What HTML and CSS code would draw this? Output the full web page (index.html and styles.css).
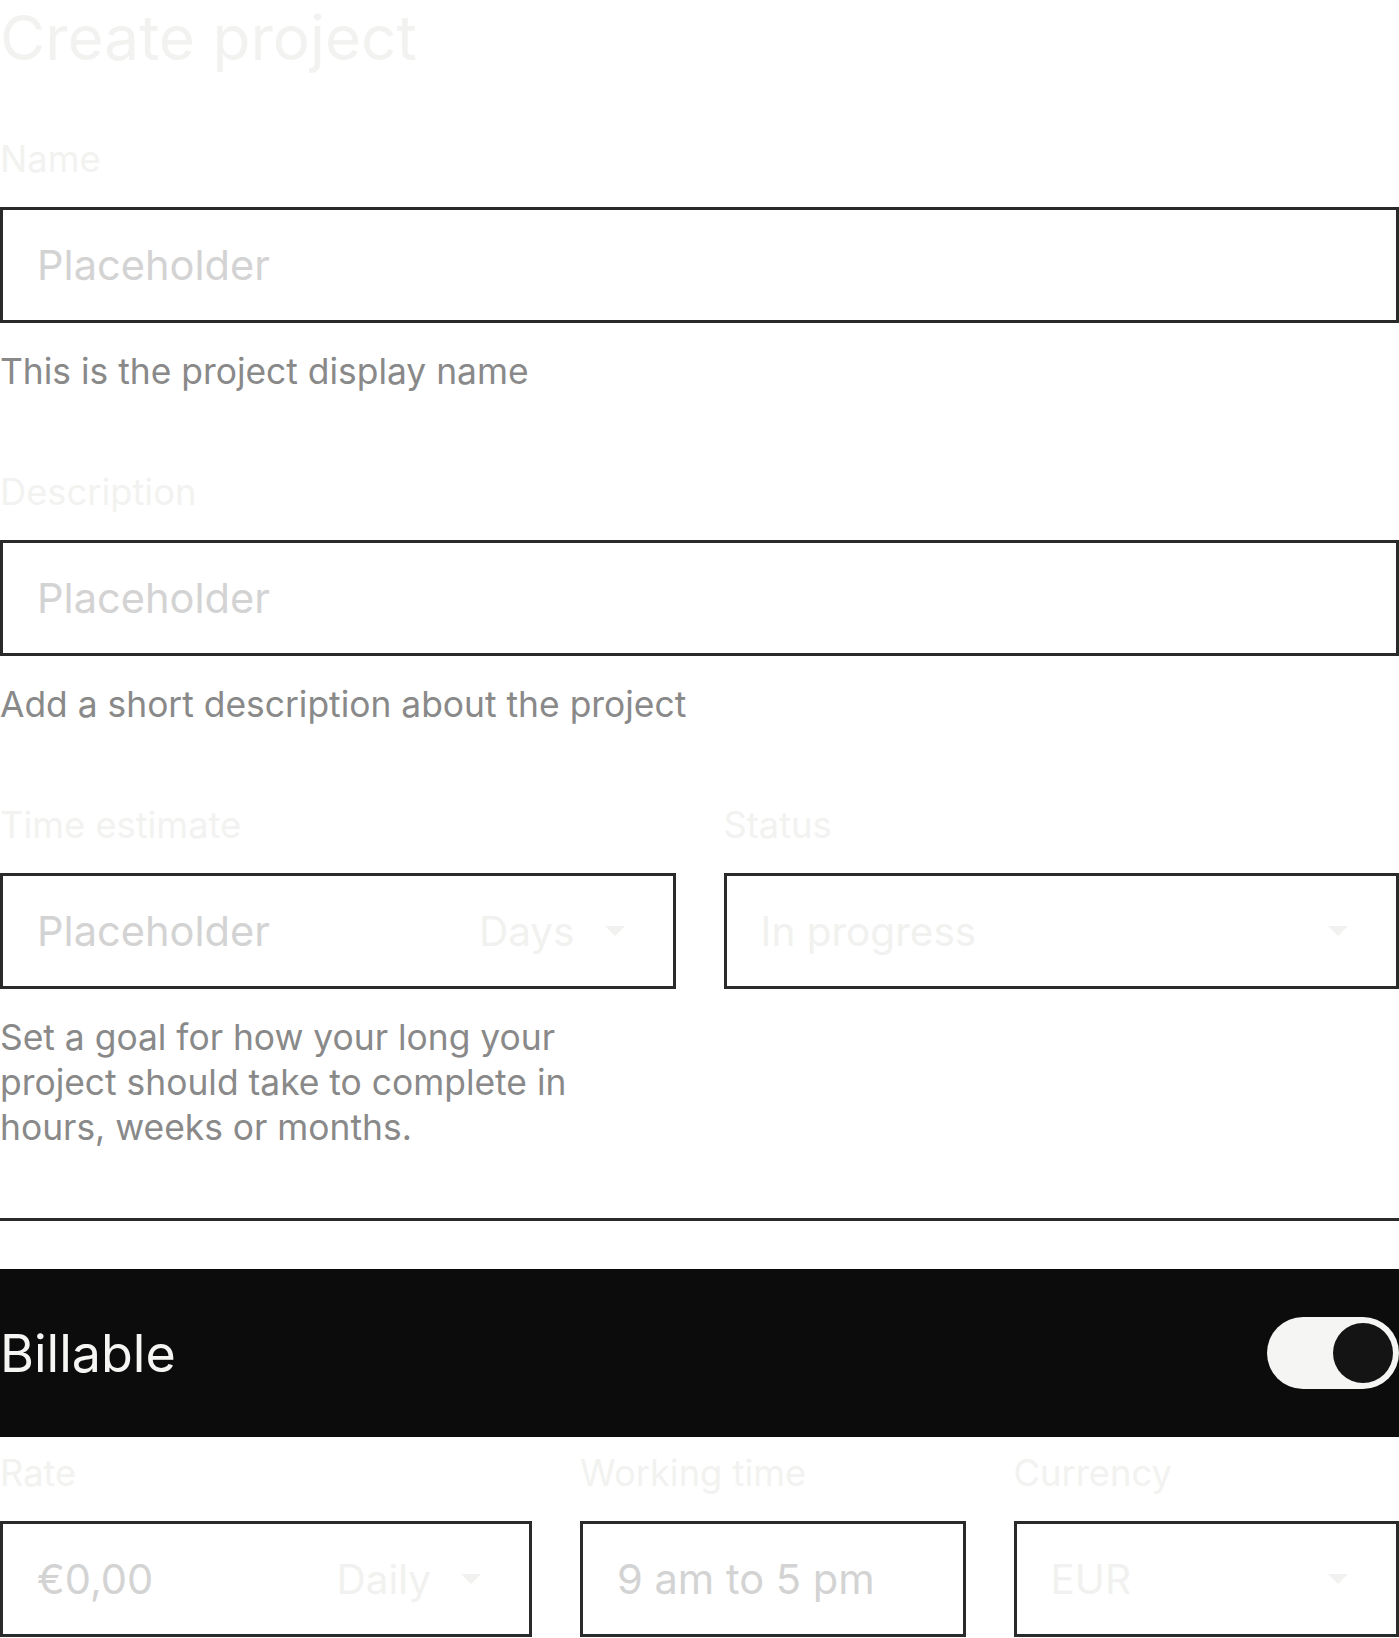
FILE: index.html
```html
<!DOCTYPE html>
<html lang="en">
<head>
<meta charset="utf-8">
<title>Create project</title>
<link rel="stylesheet" href="styles.css">
</head>
<body>
<main class="page">
  <h1 class="title">Create project</h1>

  <section class="field">
    <label class="label">Name</label>
    <div class="box"><span class="placeholder">Placeholder</span></div>
    <p class="help">This is the project display name</p>
  </section>

  <section class="field">
    <label class="label">Description</label>
    <div class="box"><span class="placeholder">Placeholder</span></div>
    <p class="help">Add a short description about the project</p>
  </section>

  <div class="row row-two">
    <section class="field">
      <label class="label">Time estimate</label>
      <div class="box">
        <span class="placeholder">Placeholder</span>
        <span class="select-part"><span class="faint">Days</span><svg class="caret" viewBox="0 0 20 10"><polygon points="0,0 20,0 10,10"/></svg></span>
      </div>
      <p class="help help-wrap">Set a goal for how your long your project should take to complete in hours, weeks or months.</p>
    </section>
    <section class="field">
      <label class="label">Status</label>
      <div class="box">
        <span class="faint">In progress</span>
        <svg class="caret" viewBox="0 0 20 10"><polygon points="0,0 20,0 10,10"/></svg>
      </div>
    </section>
  </div>

  <hr class="divider">

  <div class="band">
    <span class="band-title">Billable</span>
    <span class="toggle"><span class="knob"></span></span>
  </div>

  <div class="row row-three">
    <section class="field">
      <label class="label">Rate</label>
      <div class="box">
        <span class="placeholder">€0,00</span>
        <span class="select-part"><span class="faint">Daily</span><svg class="caret" viewBox="0 0 20 10"><polygon points="0,0 20,0 10,10"/></svg></span>
      </div>
    </section>
    <section class="field">
      <label class="label">Working time</label>
      <div class="box"><span class="placeholder">9 am to 5 pm</span></div>
    </section>
    <section class="field">
      <label class="label">Currency</label>
      <div class="box">
        <span class="faint">EUR</span>
        <svg class="caret" viewBox="0 0 20 10"><polygon points="0,0 20,0 10,10"/></svg>
      </div>
    </section>
  </div>
</main>
</body>
</html>
```

FILE: styles.css
```css
html, body {
  margin: 0;
  padding: 0;
  background: #ffffff;
  overflow: hidden;
}

body {
  font-family: Inter, "Noto Sans", "Liberation Sans", sans-serif;
  color: #2a2a2a;
}

.page {
  width: 1399px;
  display: flex;
  flex-direction: column;
}

.title {
  margin: 0 0 61px 0;
  font-size: 62px;
  line-height: 76px;
  font-weight: 400;
  color: #f2f2f0;
  letter-spacing: 0;
}

.field {
  display: flex;
  flex-direction: column;
  margin-bottom: 76px;
}

.label {
  display: block;
  font-size: 36.3px;
  line-height: 44px;
  color: #f2f2f0;
  margin-bottom: 26px;
}

.box {
  height: 116px;
  box-sizing: border-box;
  border: 3px solid #2a2a2a;
  padding: 0 48px 0 34px;
  display: flex;
  align-items: center;
  justify-content: space-between;
  font-size: 40.5px;
}

.placeholder {
  color: #d3d3d3;
  font-size: 41.6px;
}

.faint {
  color: #f1f1ef;
}

.select-part {
  display: flex;
  align-items: center;
  gap: 30px;
}

.caret {
  width: 20px;
  height: 10px;
  fill: #f1f1ef;
  flex: none;
}

.help {
  margin: 26px 0 0 0;
  font-size: 35.4px;
  line-height: 45px;
  color: #898989;
}

.help-wrap {
  max-width: 620px;
}

.row {
  display: grid;
  column-gap: 48px;
}

.row-two {
  grid-template-columns: 1fr 1fr;
}

.row-two .field {
  margin-bottom: 0;
}

.row-three {
  grid-template-columns: 532px 1fr 1fr;
}

.row-three .field {
  margin-bottom: 0;
}

.divider {
  margin: 68px 0 0 0;
  border: none;
  height: 3px;
  background: #2a2a2a;
}

.band {
  margin-top: 48px;
  height: 168px;
  background: #0c0c0c;
  display: flex;
  align-items: center;
  justify-content: space-between;
  margin-bottom: 14px;
}

.band-title {
  font-size: 52px;
  color: #f5f5f3;
}

.toggle {
  width: 132px;
  height: 72px;
  border-radius: 36px;
  background: #f5f5f3;
  display: flex;
  align-items: center;
  justify-content: flex-end;
  padding-right: 6px;
  box-sizing: border-box;
}

.knob {
  width: 60px;
  height: 60px;
  border-radius: 50%;
  background: #141414;
}
```
